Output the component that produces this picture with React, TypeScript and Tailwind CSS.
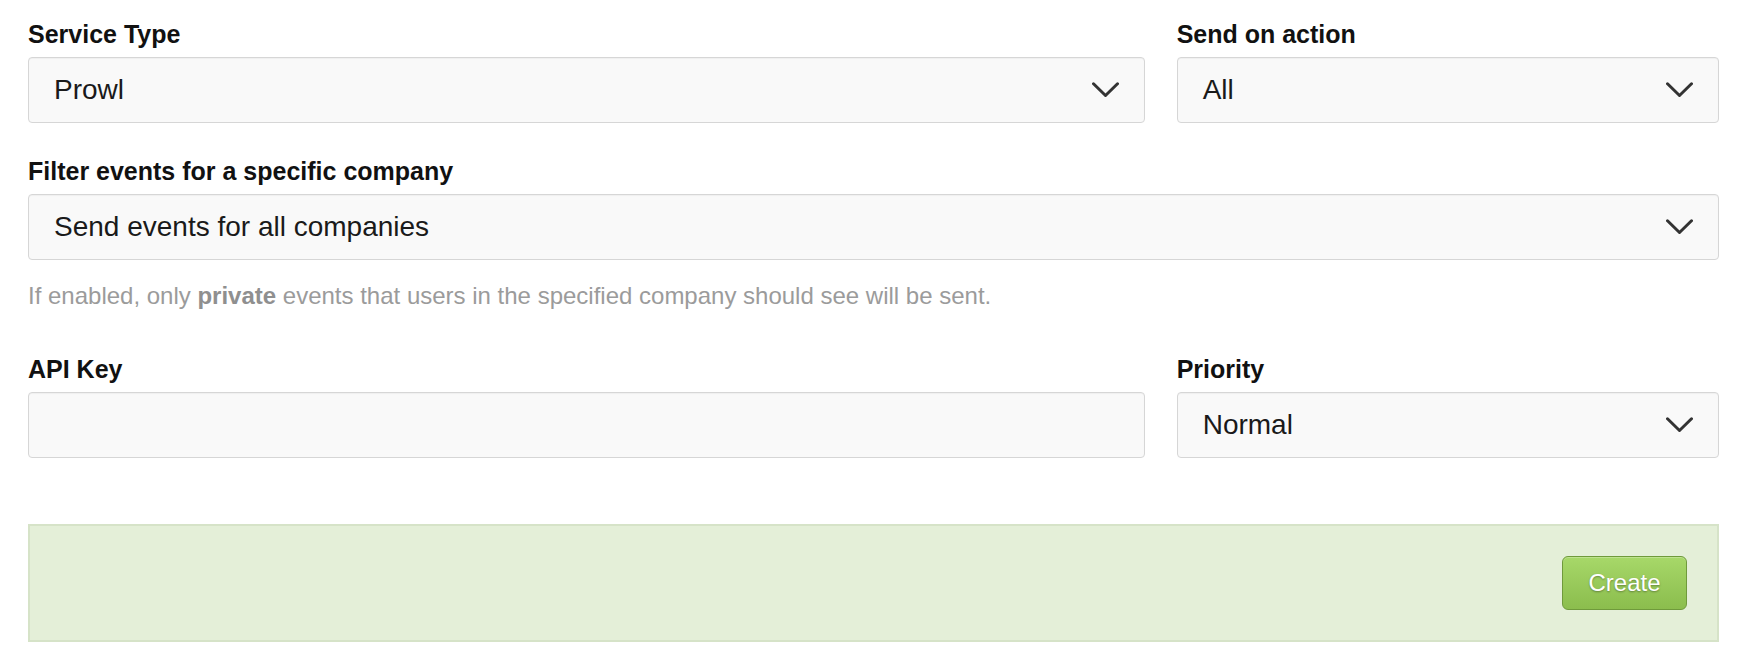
import React from "react";

function Chevron() {
  return (
    <svg width="27" height="16" viewBox="0 0 27 16" fill="none" className="shrink-0">
      <path d="M1.5 1.8 L13.5 13.5 L25.5 1.8" stroke="#333333" strokeWidth="3" strokeLinecap="round" strokeLinejoin="round" />
    </svg>
  );
}

function SelectBox({ value }: { value: string }) {
  return (
    <div className="flex h-[66px] items-center justify-between rounded-[4px] border border-[#d6d6d6] bg-[#f9f9f9] pl-[25px] pr-[25px] text-[28px] leading-[34px] text-[#1a1a1a] shadow-[inset_0_1px_1px_rgba(0,0,0,0.04)]">
      <span>{value}</span>
      <Chevron />
    </div>
  );
}

function Label({ children }: { children: React.ReactNode }) {
  return <div className="mb-[8px] text-[25px] font-bold leading-[30px] text-[#111111]">{children}</div>;
}

export default function App() {
  return (
    <div
      className="min-h-[662px] w-[1752px] bg-white pl-[28px] pt-[19px]"
      style={{ fontFamily: '"Liberation Sans", Arial, Helvetica, sans-serif' }}
    >
      <div className="w-[1691px]">
        <div className="grid grid-cols-3 gap-x-[32px]">
          <div className="col-span-2">
            <Label>Service Type</Label>
            <SelectBox value="Prowl" />
          </div>
          <div>
            <Label>Send on action</Label>
            <SelectBox value="All" />
          </div>
        </div>

        <div className="mt-[33px]">
          <Label>Filter events for a specific company</Label>
          <SelectBox value="Send events for all companies" />
          <p className="mt-[21px] text-[24px] leading-[30px] text-[#9b9b9b]">
            If enabled, only <span className="font-bold text-[#8f8f8f]">private</span> events that users in the specified company should see will be sent.
          </p>
        </div>

        <div className="mt-[43px] grid grid-cols-3 gap-x-[32px]">
          <div className="col-span-2">
            <Label>API Key</Label>
            <div className="h-[66px] rounded-[4px] border border-[#d6d6d6] bg-[#f9f9f9] shadow-[inset_0_1px_1px_rgba(0,0,0,0.04)]" />
          </div>
          <div>
            <Label>Priority</Label>
            <SelectBox value="Normal" />
          </div>
        </div>

        <div className="mt-[66px] flex justify-end border-2 border-[#d6e3c8] bg-[#e4efd8] px-[30px] py-[30px]">
          <button className="h-[54px] w-[125px] rounded-[6px] border border-[#6f9a3b] bg-gradient-to-b from-[#a7d869] to-[#8bbd4d] text-[24px] leading-none text-white shadow-[inset_0_1px_0_rgba(255,255,255,0.25)] [text-shadow:0_1px_2px_rgba(0,0,0,0.35)]">
            Create
          </button>
        </div>
      </div>
    </div>
  );
}
